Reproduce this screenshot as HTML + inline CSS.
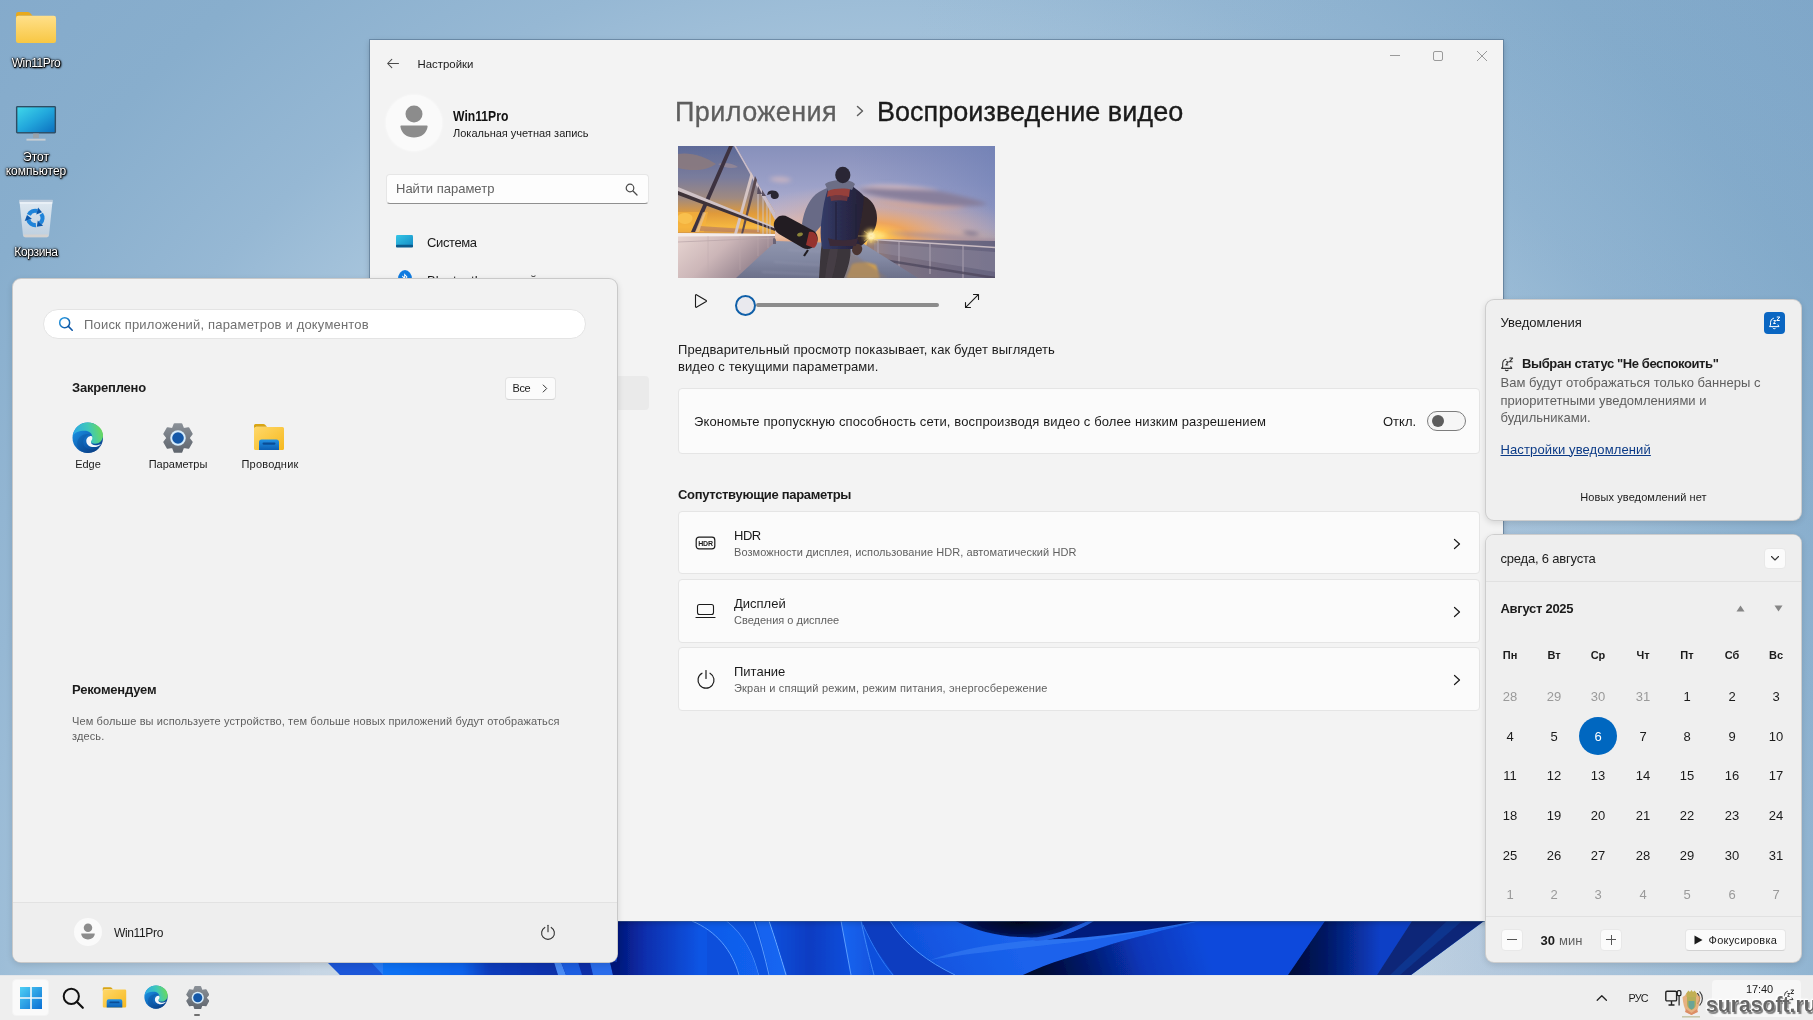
<!DOCTYPE html>
<html lang="ru">
<head>
<meta charset="utf-8">
<title>Desktop</title>
<style>
*{box-sizing:border-box;margin:0;padding:0}
html,body{width:1813px;height:1020px;overflow:hidden}
body{font-family:"Liberation Sans",sans-serif;font-size:13px;color:#1b1b1b;position:relative;
background:#8fb2d1;}
.abs{position:absolute}
#wall{position:absolute;left:0;top:0;width:1813px;height:1020px;
background:
linear-gradient(90deg,rgba(110,155,192,0) 50%,rgba(110,155,192,.22) 100%),
radial-gradient(ellipse 1300px 1444px at 900px 1000px,#c9d8e6 0%,#c9d8e6 40%,#bfd0e2 46%,#a5c3db 65%,#96b8d4 73%,#88aecd 86%,#84aacb 100%);}
#bloom{position:absolute;left:330px;top:921px;width:1320px;height:54px}
/* desktop icons */
.dlabel{will-change:transform;position:absolute;color:#fff;font-size:12px;line-height:14px;text-align:center;width:90px;
text-shadow:0 0 2px #000,0 0 3px rgba(0,0,0,.8),1px 1px 2px #000,0 1px 1px #000,1px 0 1px rgba(0,0,0,.7)}
/* settings window */
#win{will-change:transform;position:absolute;left:370px;top:40px;width:1133px;height:881px;background:#f3f3f3;
box-shadow:0 0 0 1px rgba(70,100,130,.5),0 2px 6px rgba(0,0,0,.22)}
.card{position:absolute;left:308px;width:802px;background:#fbfbfb;border:1px solid #e5e5e5;border-radius:4px}
.card .t{position:absolute;left:55px;font-size:13px;color:#1b1b1b}
.card .s{position:absolute;left:55px;font-size:11px;color:#5f5f5f}
/* start */
#start{will-change:transform;position:absolute;left:12px;top:278px;width:606px;height:685px;background:#f2f2f2;border-radius:9px;
border:1px solid rgba(0,0,0,.17);box-shadow:0 2px 6px rgba(0,0,0,.12);overflow:hidden}
#startfoot{position:absolute;left:0;top:623px;width:100%;height:62px;background:#eeeeee;border-top:1px solid #e2e2e2}
.pin{position:absolute;width:90px;text-align:center;font-size:11px;color:#1b1b1b}
/* panels */
.panel{will-change:transform;position:absolute;left:1485px;width:317px;background:#efefef;border-radius:9px;border:1px solid rgba(0,0,0,.14);
box-shadow:0 2px 6px rgba(0,0,0,.12);overflow:hidden}
.cal{position:absolute;width:40px;text-align:center;font-size:13px;color:#1b1b1b}
.cal.g{color:#9a9a9a}
.cal.h{font-weight:bold;font-size:11px}
/* taskbar */
#task{will-change:transform;position:absolute;left:0;top:975px;width:1813px;height:45px;background:#eeeeee;border-top:1px solid #e3e6ea}
</style>
</head>
<body>
<div id="wall"></div>


<svg class="abs" style="left:300px;top:921px" width="1200" height="54" viewBox="300 921 1200 54" preserveAspectRatio="none">
<defs>
  <linearGradient id="b0" x1="617" y1="0" x2="700" y2="0" gradientUnits="userSpaceOnUse"><stop offset="0" stop-color="#04177a"/><stop offset=".35" stop-color="#0a2fae"/><stop offset="1" stop-color="#0d55e4"/></linearGradient>
  <linearGradient id="b1" x1="690" y1="0" x2="790" y2="0" gradientUnits="userSpaceOnUse"><stop offset="0" stop-color="#0e58e8"/><stop offset="1" stop-color="#1467f2"/></linearGradient>
  <linearGradient id="b2" x1="770" y1="0" x2="850" y2="0" gradientUnits="userSpaceOnUse"><stop offset="0" stop-color="#0d50dc"/><stop offset=".5" stop-color="#0a3cc2"/><stop offset="1" stop-color="#0d4fdc"/></linearGradient>
  <linearGradient id="b3" x1="840" y1="0" x2="900" y2="0" gradientUnits="userSpaceOnUse"><stop offset="0" stop-color="#1866f2"/><stop offset="1" stop-color="#0b45cf"/></linearGradient>
  <linearGradient id="b4" x1="900" y1="975" x2="1000" y2="921" gradientUnits="userSpaceOnUse"><stop offset="0" stop-color="#0d4cd8"/><stop offset=".5" stop-color="#1459e4"/><stop offset="1" stop-color="#1a62ec"/></linearGradient>
  <radialGradient id="b5" cx="1020" cy="921" r="70" gradientUnits="userSpaceOnUse" gradientTransform="translate(1020 921) scale(1 .3) translate(-1020 -921)"><stop offset="0" stop-color="#01041c"/><stop offset=".6" stop-color="#03104a"/><stop offset="1" stop-color="#0a2c9a"/></radialGradient>
  <linearGradient id="b6" x1="1040" y1="975" x2="1200" y2="925" gradientUnits="userSpaceOnUse"><stop offset="0" stop-color="#010830"/><stop offset=".3" stop-color="#041a6e"/><stop offset=".6" stop-color="#0836b8"/><stop offset="1" stop-color="#0b4adc"/></linearGradient>
  <linearGradient id="b7" x1="1295" y1="0" x2="1380" y2="0" gradientUnits="userSpaceOnUse"><stop offset="0" stop-color="#020c3e"/><stop offset=".35" stop-color="#031762"/><stop offset="1" stop-color="#0a3fc6"/></linearGradient>
  <linearGradient id="bL" x1="0" y1="0" x2="340" y2="0" gradientUnits="userSpaceOnUse"><stop offset="0" stop-color="#a8c2dc"/><stop offset="1" stop-color="#c8d7e5"/></linearGradient><linearGradient id="bU" x1="383" y1="0" x2="560" y2="0" gradientUnits="userSpaceOnUse"><stop offset="0" stop-color="#0f72f4"/><stop offset=".45" stop-color="#0c62ea"/><stop offset=".6" stop-color="#0a3cbc"/><stop offset="1" stop-color="#0a2fa8"/></linearGradient><filter id="bb"><feGaussianBlur stdDeviation="0.600"/></filter>
</defs>
<g filter="url(#bb)">
  <!-- base -->
  <path d="M326 963L617 921H1484L1411 975H340z" fill="#0c4fdc"/>
  <path d="M300 955h27l13 20h-40z" fill="url(#bL)"/>
  <path d="M327 962H380L392 975H340z" fill="#1a56d8"/>
  <path d="M371 962l12 13h10l-10-13z" fill="#2a7cf4"/>
  <rect x="383" y="960" width="240" height="15" fill="url(#bU)"/>
  <path d="M554 962l4 13h8l-5-13z" fill="#4a8af4"/>
  <path d="M561 962l5 13h16l-4-13z" fill="#1c5de0"/>
  <path d="M590 962l3 13h20l-3-13z" fill="#2a6cea"/>
  <path d="M610 962h10v13h-7z" fill="#06187c"/>
  <rect x="617" y="921" width="90" height="54" fill="url(#b0)"/>
  <!-- left ribbons -->
  <path d="M690 921C715 930 732 950 740 975H790L770 921z" fill="url(#b1)"/>
  <path d="M692 921C716 931 732 950 739 975" fill="none" stroke="#5a9cff" stroke-width="1"/>
  <path d="M727 921C745 935 754 955 759 975" fill="none" stroke="#4f93fb" stroke-width="1.200"/>
  <path d="M727 921C745 935 754 955 759 975h11L756 921z" fill="#0d52e0"/>
  <path d="M754 921C760 938 765 958 769 975" fill="none" stroke="#5a9cff" stroke-width="1"/>
  <path d="M769 921C775 938 781 958 786 975" fill="none" stroke="#6aa6ff" stroke-width="1"/>
  <path d="M770 921L787 975H852L842 921z" fill="url(#b2)"/>
  <path d="M841 921L851 975H874L862 921z" fill="url(#b3)"/>
  <path d="M841 921L851 975" stroke="#5b9dff" stroke-width="1"/>
  <path d="M861 921C866 945 870 960 874 975" stroke="#3f86f8" stroke-width="1" fill="none"/>
  <path d="M862 921H892C910 945 930 962 956 975H894C880 955 868 940 862 921z" fill="#0a3cc0"/>
  <path d="M863 925C872 945 882 962 893 975" stroke="#2f78f2" stroke-width="1" fill="none"/>
  <!-- big petal -->
  <path d="M890 921C905 945 928 962 955 975H1023C1050 962 1078 955 1100 948C1130 938 1165 930 1201.700 921z" fill="url(#b4)"/>
  <path d="M930 960C980 952 1040 946 1090 940C1130 934 1170 927 1201.700 921C1160 926 1110 934 1060 938C1020 941 970 945 930 960z" fill="#3a80f4" opacity=".55"/>
  <path d="M890 921C905 945 928 962 955 975" stroke="#4d92fb" stroke-width="1" fill="none"/>
  <!-- dark fold top -->
  <path d="M955.500 921C975 930 995 936 1019 937C1030 937.500 1040 938 1046 938L1088.500 921z" fill="url(#b5)"/>
  <path d="M1093 921C1075 932 1060 938 1046 939.500C1100 938 1150 930 1196 921z" fill="#061f7c"/>
  <path d="M1028 938.500C1050 936 1070 930 1088.500 921L1094 921C1076 932 1056 939.500 1036 941z" fill="#2262e4"/>
  <!-- under petal -->
  <path d="M1023 975C1050 962 1078 955 1100 948C1130 938 1165 930 1201.700 921L1330 921L1290 975z" fill="url(#b6)"/>
  <!-- dark fold right -->
  <path d="M1325 921L1288 975H1377L1412 921z" fill="url(#b7)"/>
  <path d="M1412 921L1377 975H1411L1484 921z" fill="#0a2878"/>
  <path d="M1447 921L1390 975H1400L1462 921z" fill="#10348e"/>
</g>
</svg>

<svg width="0" height="0" style="position:absolute">
<defs>
  <linearGradient id="edA" x1="0.1" y1="0.2" x2="0.8" y2="1"><stop offset="0" stop-color="#1a8fe0"/><stop offset=".6" stop-color="#0e5fb4"/><stop offset="1" stop-color="#0a3f86"/></linearGradient>
  <linearGradient id="edB" x1="0" y1="0.5" x2="1" y2="0.3"><stop offset="0" stop-color="#2aa7e8"/><stop offset=".55" stop-color="#3fc8b8"/><stop offset="1" stop-color="#6fdb52"/></linearGradient>
  <linearGradient id="edC" x1="0" y1="0" x2="1" y2="1"><stop offset="0" stop-color="#0f6cc0"/><stop offset="1" stop-color="#0a3a7e"/></linearGradient>
  <symbol id="ic-edge" viewBox="0 0 32 32">
    <circle cx="16" cy="16" r="15.500" fill="url(#edA)"/>
    <path d="M1 14C2 6 8 .5 16 .5c8.500 0 15.500 6 15.500 13 0 5-3.500 8.500-8 8.500-3 0-4.500-1.200-4.500-2.500 0-1 1.500-1.800 1.500-4.500 0-3.500-3.500-6-7.500-6C7 9 2.500 11 1 14z" fill="url(#edB)"/>
    <path d="M11.500 21c0-4.500 3-7.500 6.500-8.500-5-1.500-11 1.500-12.500 7C4 25 8 31 15 31.500c5 .3 9-1.500 12-5-6 3-15.500 1-15.500-5.500z" fill="url(#edC)" opacity=".75"/>
    <path d="M19.500 14.200c-2.800 0-5 2.200-5 5 0 3.500 3.300 6.300 7.800 6.300 3 0 5.800-1.300 7.500-3.500-1.600 1-3.600 1.500-5.800 1.500-3 0-4.800-1.600-4.800-3.300 0-1.500 1.500-2 1.500-4 0-1.200-.5-2-1.200-2z" fill="#f4f7fb"/>
  </symbol>
  <linearGradient id="grA" x1="0" y1="0" x2="0" y2="1"><stop offset="0" stop-color="#8a9097"/><stop offset="1" stop-color="#60666e"/></linearGradient>
  <symbol id="ic-gear" viewBox="0 0 32 32">
    <path d="M10.630 5.720 L12.350 1.140 L19.650 1.140 L21.370 5.720 L22.220 6.210 L27.040 5.410 L30.690 11.730 L27.590 15.510 L27.590 16.490 L30.690 20.270 L27.040 26.590 L22.220 25.790 L21.370 26.280 L19.650 30.860 L12.350 30.860 L10.630 26.280 L9.780 25.790 L4.960 26.590 L1.310 20.270 L4.410 16.490 L4.410 15.510 L1.310 11.730 L4.960 5.410 L9.780 6.210Z" fill="url(#grA)" stroke="url(#grA)" stroke-width="2" stroke-linejoin="round"/>
    <circle cx="16" cy="16" r="8.300" fill="#d6ecfb"/>
    <circle cx="16" cy="16" r="6.200" fill="#1458a8"/>
  </symbol>
  <linearGradient id="exA" x1="0" y1="0" x2="1" y2="1"><stop offset="0" stop-color="#ffd869"/><stop offset="1" stop-color="#f6b920"/></linearGradient>
  <linearGradient id="exB" x1="0" y1="0" x2="0" y2="1"><stop offset="0" stop-color="#2392e4"/><stop offset="1" stop-color="#0c5fb4"/></linearGradient>
  <symbol id="ic-expl" viewBox="0 0 32 32">
    <path d="M1 5.500A1.500 1.500 0 0 1 2.500 4h8a2 2 0 0 1 1.400.6L14 6.700H3L1 9z" fill="#d9a514"/>
    <path d="M1 8.500A1.500 1.500 0 0 1 2.500 7H29.500A1.500 1.500 0 0 1 31 8.500V28.500A1.500 1.500 0 0 1 29.500 30H2.500A1.500 1.500 0 0 1 1 28.500z" fill="url(#exA)"/>
    <path d="M6 30v-8a2.500 2.500 0 0 1 2.500-2.500h15A2.500 2.500 0 0 1 26 22v8z" fill="url(#exB)"/>
    <rect x="9.500" y="22.500" width="13" height="2.200" rx="1.100" fill="#0a4d96"/>
  </symbol>
  <linearGradient id="fdA" x1="0" y1="0" x2="0" y2="1"><stop offset="0" stop-color="#ffe08a"/><stop offset="1" stop-color="#f8c743"/></linearGradient>
  <symbol id="ic-folder" viewBox="0 0 44 36">
    <path d="M1 4.500A2.500 2.500 0 0 1 3.500 2h10a3 3 0 0 1 2 .8L18.500 6H4L1 10z" fill="#e8a91c"/>
    <path d="M1 8.500A2.500 2.500 0 0 1 3.500 6H40.500A2.500 2.500 0 0 1 43 8.500V31.500A2.500 2.500 0 0 1 40.500 34H3.500A2.500 2.500 0 0 1 1 31.500z" fill="url(#fdA)"/>
  </symbol>
  <linearGradient id="pcA" x1="0" y1="0" x2="1" y2="1"><stop offset="0" stop-color="#3fd6ea"/><stop offset=".5" stop-color="#22a7dc"/><stop offset="1" stop-color="#0c70bf"/></linearGradient>
  <symbol id="ic-pc" viewBox="0 0 44 40">
    <rect x="1" y="1" width="42" height="29" rx="1.500" fill="#2f4d63"/>
    <rect x="2.500" y="2.500" width="39" height="26" fill="url(#pcA)"/>
    <path d="M19 30h6v5h-6z" fill="#9aa3ab"/>
    <path d="M12 35.500h20v2H12z" fill="#c7cdd2"/>
  </symbol>
  <linearGradient id="rbA" x1="0" y1="0" x2="0" y2="1"><stop offset="0" stop-color="#f2f6fa"/><stop offset="1" stop-color="#c9d6e3"/></linearGradient>
  <symbol id="ic-bin" viewBox="0 0 36 40">
    <path d="M1.400 2.200h33.200l-3.600 35.300a2 2 0 0 1-2 1.800H7a2 2 0 0 1-2-1.800z" fill="url(#rbA)" fill-opacity=".82"/>
    <path d="M1.400 1.800h33.200l-.3 3H1.700z" fill="#b9c9d9" fill-opacity=".9"/>
    <path d="M1.600 4.300h32.800l-.1 1.300H1.700z" fill="#f4f9fd"/>
    <path d="M5.600 36.500h24.800l-.2 1.600a1.500 1.500 0 0 1-1.500 1.200H7.300a1.500 1.500 0 0 1-1.500-1.200z" fill="#d9d2cc" fill-opacity=".8"/>
    <g id="rarr"><path d="M10.780 16.960A7.200 7.200 0 0 1 19.160 13.050" fill="none" stroke="#1f84da" stroke-width="4.200"/><path d="M20.040 9.400L18.280 16.600 24 14.300z" fill="#0b58ac"/></g>
    <use href="#rarr" transform="rotate(120 17.300 20)"/>
    <use href="#rarr" transform="rotate(240 17.300 20)"/>
  </symbol>
</defs>
</svg>
<svg class="abs" style="left:14.700px;top:9.500px" width="42" height="35" viewBox="0 0 44 36" preserveAspectRatio="none"><use href="#ic-folder"/></svg>
<div class="dlabel" style="left:-9.500px;top:56px;letter-spacing:-.4px">Win11Pro</div>
<svg class="abs" style="left:14.800px;top:105px" width="42" height="38" viewBox="0 0 44 40" preserveAspectRatio="none"><use href="#ic-pc"/></svg>
<div class="dlabel" style="left:-9.500px;top:150.500px;line-height:13.500px">Этот<br>компьютер</div>
<svg class="abs" style="left:18px;top:198px" width="36" height="40" viewBox="0 0 36 40"><use href="#ic-bin"/></svg>
<div class="dlabel" style="left:-9.500px;top:244.500px;letter-spacing:-.35px">Корзина</div>

<div id="win">
  <!-- titlebar -->
  <svg class="abs" style="left:16px;top:18px" width="14" height="11" viewBox="0 0 14 11"><path d="M12.500 5.500H1.800M5.800 1.300L1.600 5.500l4.200 4.200" fill="none" stroke="#4a4a4a" stroke-width="1.050" stroke-linecap="round" stroke-linejoin="round"/></svg>
  <div class="abs" style="left:47.500px;top:17px;font-size:11.400px;line-height:15px;color:#1b1b1b">Настройки</div>
  <svg class="abs" style="left:1019px;top:10px" width="100" height="12" viewBox="0 0 100 12">
    <path d="M1 5.5h10" stroke="#9a9a9a" stroke-width="1"/>
    <rect x="44.5" y="1.5" width="9" height="9" rx="1.5" fill="none" stroke="#9a9a9a" stroke-width="1"/>
    <path d="M88 1l10 10M98 1L88 11" stroke="#9a9a9a" stroke-width="1"/>
  </svg>
  <!-- account -->
  <div class="abs" style="left:15.500px;top:55px;width:56px;height:56px;border-radius:50%;background:#fafafa;box-shadow:0 0 3px rgba(255,255,255,.9)"></div>
  <svg class="abs" style="left:29.500px;top:65px" width="28" height="33" viewBox="0 0 28 33"><circle cx="14" cy="9" r="8.5" fill="#8c8c8c"/><path d="M1 20.5h26a1 1 0 0 1 .6 1.2C26.5 28.5 21 32.5 14 32.5S1.500 28.500.4 21.700A1 1 0 0 1 1 20.500z" fill="#8c8c8c"/></svg>
  <div class="abs" style="left:83px;top:68px;font-size:14.500px;font-weight:bold;line-height:17px;color:#111;transform:scaleX(.84);transform-origin:0 50%">Win11Pro</div>
  <div class="abs" style="left:83px;top:86px;font-size:11px;line-height:14px;color:#1b1b1b">Локальная учетная запись</div>
  <!-- search -->
  <div class="abs" style="left:16px;top:134px;width:263px;height:30px;background:#fdfdfd;border:1px solid #e6e6e6;border-bottom:1px solid #8f8f8f;border-radius:4px"></div>
  <div class="abs" style="left:26px;top:141px;font-size:13px;line-height:16px;color:#616161">Найти параметр</div>
  <svg class="abs" style="left:255px;top:143px" width="13" height="13" viewBox="0 0 13 13"><circle cx="5" cy="5" r="3.8" fill="none" stroke="#4a4a4a" stroke-width="1.2"/><path d="M8 8l4 4" stroke="#4a4a4a" stroke-width="1.3" stroke-linecap="round"/></svg>
  <!-- nav -->
  <svg class="abs" style="left:25.500px;top:195.300px" width="17" height="13" viewBox="0 0 19 14" preserveAspectRatio="none"><defs><linearGradient id="sysg" x1="0" y1="0" x2="1" y2="1"><stop offset="0" stop-color="#35c6e6"/><stop offset="1" stop-color="#1289c4"/></linearGradient></defs><rect x="0" y="0" width="19" height="13" rx="1.5" fill="url(#sysg)"/><rect x="0" y="10.5" width="19" height="3" rx="1" fill="#0b5a8c"/></svg>
  <div class="abs" style="left:57px;top:195px;font-size:13px;line-height:16px;color:#1b1b1b;letter-spacing:-.38px">Система</div>
  <svg class="abs" style="left:27.500px;top:230px" width="14" height="18" viewBox="0 0 18 18" preserveAspectRatio="none"><circle cx="9" cy="9" r="9" fill="#0f7be0"/><path d="M5.500 6l6 5-3 2.500V4.500l3 2.500-6 5" fill="none" stroke="#fff" stroke-width="1.100"/></svg>
  <div class="abs" style="left:57px;top:232.500px;font-size:13px;line-height:16px;color:#1b1b1b">Bluetooth и устройства</div>
  <div class="abs" style="left:16px;top:336px;width:263px;height:34px;background:#eaeaea;border-radius:4px"></div>
  <!-- heading -->
  <div class="abs" style="left:305px;top:54.500px;font-size:27px;line-height:34px;color:#5e5e5e;letter-spacing:.4px;-webkit-text-stroke:.3px #5e5e5e">Приложения</div>
  <svg class="abs" style="left:484.500px;top:64.500px" width="10" height="12" viewBox="0 0 10 12"><path d="M2.500 1.500L7.500 6l-5 4.500" fill="none" stroke="#5e5e5e" stroke-width="1.500" stroke-linecap="round" stroke-linejoin="round"/></svg>
  <div class="abs" style="left:507px;top:54.500px;font-size:27px;line-height:34px;color:#1a1a1a;letter-spacing:.03px;-webkit-text-stroke:.35px #1a1a1a">Воспроизведение видео</div>
  <svg class="abs" style="left:308px;top:106px" width="317" height="132" viewBox="0 0 317 132">
<defs>
  <linearGradient id="pSky" x1="0" y1="0" x2="0" y2="1"><stop offset="0" stop-color="#8790bb"/><stop offset=".3" stop-color="#9ca1c8"/><stop offset=".5" stop-color="#b6b2d0"/><stop offset=".62" stop-color="#d3c4d2"/><stop offset=".69" stop-color="#ecccb6"/><stop offset=".72" stop-color="#dcae94"/><stop offset=".75" stop-color="#8c7c8c"/><stop offset="1" stop-color="#66627a"/></linearGradient>
  <linearGradient id="pSkyR" x1="0" y1="0" x2="1" y2="0"><stop offset="0" stop-color="#6f7fb6" stop-opacity="0"/><stop offset=".55" stop-color="#6f7fb6" stop-opacity="0"/><stop offset="1" stop-color="#6578b2" stop-opacity=".55"/></linearGradient>
  <radialGradient id="pSun" cx="193" cy="90" r="85" gradientUnits="userSpaceOnUse" gradientTransform="translate(193 90) scale(1.700 .62) translate(-193 -90)"><stop offset="0" stop-color="#fff6c0"/><stop offset=".06" stop-color="#ffe27a"/><stop offset=".13" stop-color="#ffc04e"/><stop offset=".26" stop-color="#f6a24a" stop-opacity=".85"/><stop offset=".55" stop-color="#eeaa80" stop-opacity=".45"/><stop offset="1" stop-color="#e8b8a0" stop-opacity="0"/></radialGradient>
  <linearGradient id="pGlass" x1="0" y1="0" x2="0" y2="1"><stop offset="0" stop-color="#5d6a98"/><stop offset=".35" stop-color="#7a7c9c"/><stop offset=".58" stop-color="#a08a80"/><stop offset=".75" stop-color="#e09a3a"/><stop offset=".9" stop-color="#f6b840"/><stop offset="1" stop-color="#c98a48"/></linearGradient>
  <linearGradient id="pWall" x1="0" y1="0" x2="1" y2=".5"><stop offset="0" stop-color="#e8d6d2"/><stop offset=".5" stop-color="#ccb6b8"/><stop offset="1" stop-color="#8e7c88"/></linearGradient>
  <linearGradient id="pDeck" x1="0" y1="0" x2="0" y2="1"><stop offset="0" stop-color="#9096ae"/><stop offset=".5" stop-color="#8288a2"/><stop offset="1" stop-color="#6c708a"/></linearGradient>
  <linearGradient id="pSea" x1="0" y1="0" x2="1" y2="0"><stop offset="0" stop-color="#a8846c"/><stop offset=".25" stop-color="#7e7282"/><stop offset="1" stop-color="#666480"/></linearGradient>
  <linearGradient id="pPack" x1="0" y1="0" x2="1" y2="0"><stop offset="0" stop-color="#343c68"/><stop offset=".45" stop-color="#29294a"/><stop offset="1" stop-color="#251c28"/></linearGradient>
  <filter id="pb1" x="-20%" y="-20%" width="140%" height="140%"><feGaussianBlur stdDeviation="1.200"/></filter>
  <filter id="pb2" x="-20%" y="-40%" width="140%" height="180%"><feGaussianBlur stdDeviation="2.200"/></filter>
  <filter id="pb05" x="-10%" y="-10%" width="120%" height="120%"><feGaussianBlur stdDeviation="0.750"/></filter>
  <clipPath id="pclip"><rect x="0" y="0" width="317" height="132"/></clipPath>
</defs>
<g clip-path="url(#pclip)">
  <rect width="317" height="132" fill="url(#pSky)"/>
  <rect width="317" height="132" fill="url(#pSkyR)"/>
  <rect width="317" height="132" fill="url(#pSun)"/>
  <!-- clouds -->
  <g filter="url(#pb2)">
    <path d="M180 44c16-4 40-4 66-1 24 3 48 9 64 15-16 4-44 2-70-2-26-3-48-6-60-12z" fill="#857b98" opacity=".9"/>
    <path d="M182 41c20-4 50-2 80 3-30-1-56-1-80-3z" fill="#dcc0c4" opacity=".8"/>
    <path d="M190 53c28 4 60 7 100 8-30 5-70 1-100-8z" fill="#dda489" opacity=".65"/>
    <path d="M91 33c6-3 16-3 23 1-7 4-17 3-23-1z" fill="#c4b2c2"/>
    <path d="M206 87c20-2 50 0 80 3 16 2 26 3 32 4v3c-30-1-80-5-112-10z" fill="#9a88a0" opacity=".6"/>
    <path d="M284 86c6-1 14 0 18 2-6 2-12 1-18-2z" fill="#726c8a"/>
  </g>
  <!-- sea and right railing -->
  <g filter="url(#pb05)">
    <path d="M190 93l127 2v37H180z" fill="url(#pSea)"/>
    <path d="M196 93.500l121 8" stroke="#c9bcc2" stroke-width="1.400"/>
    <path d="M200 94v26M221 96v28M252 98v30M285 100v32" stroke="#b4a9b6" stroke-width="1.100" opacity=".85"/>
    <path d="M196 97l121 9v20l-121-20z" fill="#9c94a8" opacity=".35"/>
    <path d="M180 110l137 22" stroke="#4d475c" stroke-width="2.600" opacity=".75"/>
  </g>
  <!-- deck -->
  <path d="M98 95L56 132H240L186 98z" fill="url(#pDeck)" filter="url(#pb05)"/>
  <path d="M110 104l70 4M96 116l90 6M84 126l110 5" stroke="#a3a6be" stroke-width="1.200" opacity=".45" filter="url(#pb1)"/>
  <path d="M174 118c6-2 18-2 24 1l4 13h-34z" fill="#e6a840" opacity=".8" filter="url(#pb1)"/>
  <path d="M170 104l40 28h-50z" fill="#8a7870" opacity=".5" filter="url(#pb1)"/>
  <!-- ship glass wall left -->
  <g filter="url(#pb05)">
    <path d="M0 0H58C70 22 84 44 97 66V90L0 88z" fill="url(#pGlass)"/>
    <path d="M0 8c12-2 26 2 38 10-8 6-22 8-38 4z" fill="#8c7a7c" opacity=".85"/>
    <path d="M40 18c6-2 14-1 20 3-6 2-14 1-20-3z" fill="#9c8c94" opacity=".7"/>
    <path d="M58 0c12 22 26 44 39 66v8C84 50 70 24 56 0z" fill="#c9bcc8"/>
    <path d="M0 70c3-4 11-4 14 0 2 4-2 8-7 8s-9-4-7-8z" fill="#ffe27a"/>
    <path d="M0 66h30l-4 20H0z" fill="#f6b23c" opacity=".7"/>
    <path d="M22 80l60 4v3l-60-2z" fill="#b07868" opacity=".6"/>
    <path d="M51 0L13 86h4.500L55 0z" fill="#3c3240"/>
    <path d="M17 86l8-20 3 1-7 19z" fill="#e8c090" opacity=".7"/>
    <path d="M73 26L56 88h3L75 30z" fill="#d4c4c4"/>
    <path d="M77 30L63 88h2L79 34z" fill="#5a4a50"/>
    <path d="M0 42L97 82v3L0 49z" fill="#3e3238"/>
    <path d="M0 41L97 81v1.500L0 45z" fill="#cfc2c6"/>
    <path d="M80 46v40M85 50v38M89 56v32M92 62v26" stroke="#cfc6cc" stroke-width=".9"/>
    <path d="M80 40l4 8-5 0zM84 44l4 6h-4z" fill="#5a5060"/>
    <path d="M90 46c3-2 8-2 10 1s0 6-3 6-5-2-4-5l-4 1z" fill="#2c2630"/>
    <!-- white wall -->
    <path d="M0 87L97 88 97 96 58 132H0z" fill="url(#pWall)"/>
    <path d="M0 87L97 88v2L0 90.500z" fill="#f4ecea"/>
    <path d="M0 96L97 92" stroke="#b8a4a8" stroke-width="1" opacity=".7"/>
    <path d="M30 90v42M62 90v34M80 90v20M90 90v12" stroke="#bca8ac" stroke-width=".8" opacity=".6"/>
    <path d="M96 92c1 0 2 1 2 3v3h-3v-3c0-2 0-3 1-3z" fill="#6a6474"/>
  </g>
  <!-- man -->
  <g filter="url(#pb05)">
    <path d="M141 132c1-12 1-24 3-36h28c2 12-1 24-6 36z" fill="#3a343a"/>
    <path d="M147 132c1-10 3-20 5-30h8c-1 10-3 20-6 30z" fill="#4a4248" opacity=".7"/>
    <path d="M124 78c2-14 8-27 17-32 5-3 10-5 15-6l6 4-14 30-12 14c-6-2-10-5-12-10z" fill="#686b86"/>
    <path d="M150 42c4-3 10-4 15-4 6 0 10 2 13 5 4 3 8 6 10 10 6 5 10 12 10 20 0 10-6 18-13 24l-6 6h-34c-3-8-3-20-1-32 1-10 3-20 6-29z" fill="url(#pPack)"/>
    <path d="M186 50c8 4 13 12 13 22 0 10-6 20-16 28l-4-8c4-14 6-28 7-42z" fill="#33262c"/>
    <path d="M150 44c5-3 16-4 22-1l-1 8c-7-2-15-2-22 0z" fill="#96403a"/>
    <path d="M152 50c6-1 12-1 18 0l-1 5c-5-1-11-1-16 0z" fill="#7c3a3c" opacity=".8"/>
    <path d="M147 38c4-3 11-4 17-4s10 1 13 4l-3 6c-6-2-17-2-24 1z" fill="#6c6e86"/>
    <ellipse cx="164.800" cy="29" rx="7.600" ry="8.300" fill="#2a2835"/>
    <path d="M176 98c3-1 7 0 8 3s-1 7-4 8-6-2-6-5z" fill="#4c3630"/>
    <path d="M158 56v38M178 58v40" stroke="#222038" stroke-width="1.300" opacity=".8"/>
    <path d="M150 92c8 3 22 3 30 0l-2 8h-26z" fill="#3a2c38"/>
  </g>
  <!-- snowboard bag -->
  <g filter="url(#pb05)">
    <path d="M99 72c3-3 7-3 11-1l26 14c4 3 5 9 2 13-3 5-9 6-13 4L101 88c-6-4-7-12-2-16z" fill="#221c22"/>
    <path d="M131 86c4-1 7 1 8 5s0 9-3 11l-8-3z" fill="#9c3230" opacity=".95"/>
    <path d="M130 104l-4 6" stroke="#221c22" stroke-width="2.200"/>
    <ellipse cx="122" cy="88.500" rx="3" ry="1.800" fill="#b8b040" opacity=".7" transform="rotate(-20 122 88.500)"/>
  </g>
  <!-- sun flare -->
  <circle cx="193" cy="90" r="7" fill="#ffd866" opacity=".8" filter="url(#pb2)"/><circle cx="193" cy="90" r="3.800" fill="#fff6c8" filter="url(#pb1)"/>
  <path d="M180 90h26M193 83v14M186 85l14 10M200 85l-14 10" stroke="#ffe080" stroke-width=".7" opacity=".6" filter="url(#pb05)"/>
</g>
</svg>

  <!-- player controls -->
  <svg class="abs" style="left:323px;top:253px" width="16" height="16" viewBox="0 0 16 16"><path d="M2.500 2.200v11.600a.6.600 0 0 0 .9.500l9.800-5.800a.6.600 0 0 0 0-1L3.400 1.700a.6.600 0 0 0-.9.500z" fill="none" stroke="#1b1b1b" stroke-width="1.100" stroke-linejoin="round"/></svg>
  <div class="abs" style="left:386px;top:263px;width:183px;height:4px;background:#8b8b8b;border-radius:2px"></div>
  <div class="abs" style="left:365px;top:255px;width:21px;height:21px;border-radius:50%;border:2px solid #0f5fa8;background:#e9e9ee"></div>
  <svg class="abs" style="left:594px;top:253px" width="16" height="16" viewBox="0 0 16 16"><path d="M9.500 1.500h5v5M14.300 1.700L1.700 14.300M1.500 9.500v5h5" fill="none" stroke="#1b1b1b" stroke-width="1.100" stroke-linecap="round" stroke-linejoin="round"/></svg>
  <div class="abs" style="left:308px;top:301px;font-size:13px;line-height:17px;color:#1b1b1b;white-space:nowrap;letter-spacing:.09px">Предварительный просмотр показывает, как будет выглядеть<br>видео с текущими параметрами.</div>
  <!-- card toggle -->
  <div class="card" style="top:348.300px;height:65.400px">
    <div class="abs" style="left:15px;top:24.700px;font-size:13px;line-height:16px;white-space:nowrap;letter-spacing:.128px">Экономьте пропускную способность сети, воспроизводя видео с более низким разрешением</div>
    <div class="abs" style="left:704px;top:24.700px;font-size:13px;line-height:16px">Откл.</div>
    <div class="abs" style="left:747.500px;top:22.200px;width:39px;height:20px;border:1px solid #7d7d7d;border-radius:10px;background:#f6f6f6"></div>
    <div class="abs" style="left:752.500px;top:26.200px;width:12px;height:12px;border-radius:50%;background:#5d5d5d"></div>
  </div>
  <div class="abs" style="left:308px;top:446.600px;font-size:13px;line-height:16px;font-weight:bold;color:#1b1b1b;letter-spacing:-.32px">Сопутствующие параметры</div>
  <div class="card" style="top:470.600px;height:63.900px">
    <svg class="abs" style="left:16px;top:22px" width="21" height="18" viewBox="0 0 21 18"><rect x="1.200" y="3.200" width="18.600" height="11.600" rx="2.800" fill="none" stroke="#1b1b1b" stroke-width="1.200"/><text x="10.500" y="11.700" font-size="7" font-weight="bold" text-anchor="middle" font-family="Liberation Sans" fill="#1b1b1b" letter-spacing="-.2">HDR</text></svg>
    <div class="t" style="top:16px;line-height:16px;letter-spacing:-.5px">HDR</div>
    <div class="s" style="top:33px;line-height:14px;letter-spacing:.07px">Возможности дисплея, использование HDR, автоматический HDR</div>
    <svg class="abs" style="left:774px;top:26px" width="8" height="12" viewBox="0 0 8 12"><path d="M1.500 1.500L6.500 6l-5 4.500" fill="none" stroke="#1b1b1b" stroke-width="1.200" stroke-linecap="round" stroke-linejoin="round"/></svg>
  </div>
  <div class="card" style="top:538.800px;height:64px">
    <svg class="abs" style="left:16px;top:23px" width="21" height="17" viewBox="0 0 21 17"><rect x="2.500" y="1.500" width="16" height="10" rx="2" fill="none" stroke="#1b1b1b" stroke-width="1.100"/><path d="M1 14.500h19" stroke="#1b1b1b" stroke-width="1.200" stroke-linecap="round"/></svg>
    <div class="t" style="top:16px;line-height:16px">Дисплей</div>
    <div class="s" style="top:33px;line-height:14px">Сведения о дисплее</div>
    <svg class="abs" style="left:774px;top:26px" width="8" height="12" viewBox="0 0 8 12"><path d="M1.500 1.500L6.500 6l-5 4.500" fill="none" stroke="#1b1b1b" stroke-width="1.200" stroke-linecap="round" stroke-linejoin="round"/></svg>
  </div>
  <div class="card" style="top:606.700px;height:64.200px">
    <svg class="abs" style="left:17px;top:21px" width="20" height="21" viewBox="0 0 20 21"><path d="M10 1.500v8" stroke="#1b1b1b" stroke-width="1.200" stroke-linecap="round"/><path d="M6 4.200a8 8 0 1 0 8 0" fill="none" stroke="#1b1b1b" stroke-width="1.200" stroke-linecap="round"/></svg>
    <div class="t" style="top:16px;line-height:16px">Питание</div>
    <div class="s" style="top:33px;line-height:14px;letter-spacing:.19px">Экран и спящий режим, режим питания, энергосбережение</div>
    <svg class="abs" style="left:774px;top:26px" width="8" height="12" viewBox="0 0 8 12"><path d="M1.500 1.500L6.500 6l-5 4.500" fill="none" stroke="#1b1b1b" stroke-width="1.200" stroke-linecap="round" stroke-linejoin="round"/></svg>
  </div>
</div>

<div id="start">
  <div class="abs" style="left:30px;top:30px;width:543px;height:30px;background:#fff;border:1px solid #e4e4e4;border-radius:15px"></div>
  <svg class="abs" style="left:44.500px;top:37px" width="16" height="16" viewBox="0 0 18 18"><defs><linearGradient id="sg" x1="0" y1="0" x2="1" y2="1"><stop offset="0" stop-color="#2aa0e8"/><stop offset="1" stop-color="#0b4e9c"/></linearGradient></defs><circle cx="7.500" cy="7.500" r="5.600" fill="none" stroke="url(#sg)" stroke-width="1.700"/><path d="M11.700 11.700l4.300 4.300" stroke="#0d56a6" stroke-width="1.800" stroke-linecap="round"/></svg>
  <div class="abs" style="left:71px;top:37.800px;font-size:13px;line-height:16px;color:#707070;letter-spacing:.18px">Поиск приложений, параметров и документов</div>
  <div class="abs" style="left:59px;top:100.700px;font-size:13px;line-height:16px;font-weight:bold;color:#1b1b1b;letter-spacing:-.2px">Закреплено</div>
  <div class="abs" style="left:492px;top:97.600px;width:51px;height:23px;background:#fbfbfb;border:1px solid #e3e3e3;border-bottom-color:#d2d2d2;border-radius:4px"></div>
  <div class="abs" style="left:499.500px;top:103px;font-size:11px;line-height:13px;color:#1b1b1b;letter-spacing:-.4px">Все</div>
  <svg class="abs" style="left:529px;top:105px" width="6" height="9" viewBox="0 0 6 9"><path d="M1.200 1l3.500 3.500L1.200 8" fill="none" stroke="#333" stroke-width="1" stroke-linecap="round" stroke-linejoin="round"/></svg>
  <!-- pinned -->
  <svg class="abs" style="left:58.800px;top:142.800px" width="31.500" height="31.500" viewBox="0 0 32 32"><use href="#ic-edge"/></svg>
  <div class="pin" style="left:30px;top:179px">Edge</div>
  <svg class="abs" style="left:150px;top:143.500px" width="30" height="30" viewBox="0 0 32 32"><use href="#ic-gear"/></svg>
  <div class="pin" style="left:120px;top:179px">Параметры</div>
  <svg class="abs" style="left:240px;top:141.200px" width="32" height="32" viewBox="0 0 32 32"><use href="#ic-expl"/></svg>
  <div class="pin" style="left:212px;top:179px;letter-spacing:.2px">Проводник</div>
  <div class="abs" style="left:59px;top:403px;font-size:13px;line-height:16px;font-weight:bold;color:#1b1b1b;letter-spacing:-.2px">Рекомендуем</div>
  <div class="abs" style="left:59px;top:435px;font-size:11px;line-height:15px;color:#5f5f5f;white-space:nowrap;letter-spacing:.115px">Чем больше вы используете устройство, тем больше новых приложений будут отображаться<br>здесь.</div>
  <div id="startfoot">
    <div class="abs" style="left:61px;top:15px;width:28px;height:28px;border-radius:50%;background:#fafafa"></div>
    <svg class="abs" style="left:68px;top:20px" width="14" height="17" viewBox="0 0 28 33"><circle cx="14" cy="9" r="8.500" fill="#8c8c8c"/><path d="M1 20.500h26a1 1 0 0 1 .6 1.200C26.500 28.500 21 32.500 14 32.500S1.500 28.500.4 21.700A1 1 0 0 1 1 20.500z" fill="#8c8c8c"/></svg>
    <div class="abs" style="left:101px;top:22.800px;font-size:12px;line-height:14px;color:#1b1b1b;letter-spacing:-.35px">Win11Pro</div>
    <svg class="abs" style="left:527px;top:21px" width="16" height="17" viewBox="0 0 20 21"><path d="M10 1.500v8" stroke="#333" stroke-width="1.400" stroke-linecap="round"/><path d="M6 4.200a8 8 0 1 0 8 0" fill="none" stroke="#333" stroke-width="1.400" stroke-linecap="round"/></svg>
  </div>
</div>

<div class="panel" style="left:1484.500px;width:317px;top:299px;height:222px">
  <div class="abs" style="left:14.500px;top:15px;font-size:13px;line-height:16px;color:#1b1b1b">Уведомления</div>
  <div class="abs" style="left:278px;top:12px;width:21px;height:22px;background:#0a66c2;border-radius:4px"></div>
  <svg class="abs" style="left:282px;top:16px" width="14" height="14" viewBox="0 0 14 14"><path d="M5.500 2.200A4.200 4.200 0 0 0 2.500 6.300V9l-1 1.600h9.500L10 9" fill="none" stroke="#fff" stroke-width="1" stroke-linecap="round" stroke-linejoin="round"/><path d="M4.800 11.800a1.700 1.700 0 0 0 3 0" fill="none" stroke="#fff" stroke-width="1"/><path d="M5.500 4.500h2.200L5.500 7.500h2.200M8.800 1h3L8.800 4.500h3" fill="none" stroke="#fff" stroke-width="1" stroke-linejoin="round"/></svg>
  <svg class="abs" style="left:14px;top:57px" width="15" height="15" viewBox="0 0 14 14"><path d="M5.500 2.200A4.200 4.200 0 0 0 2.500 6.300V9l-1 1.600h9.500L10 9" fill="none" stroke="#333" stroke-width="1" stroke-linecap="round" stroke-linejoin="round"/><path d="M4.800 11.800a1.700 1.700 0 0 0 3 0" fill="none" stroke="#333" stroke-width="1"/><path d="M5.500 4.500h2.200L5.500 7.500h2.200M8.800 1h3L8.800 4.500h3" fill="none" stroke="#333" stroke-width="1" stroke-linejoin="round"/></svg>
  <div class="abs" style="left:36px;top:56px;font-size:13px;line-height:16px;font-weight:bold;color:#1b1b1b;white-space:nowrap;letter-spacing:-.39px">Выбран статус "Не беспокоить"</div>
  <div class="abs" style="left:14.500px;top:74px;font-size:13px;line-height:17.600px;color:#5f5f5f;white-space:nowrap;letter-spacing:.02px">Вам будут отображаться только баннеры с<br>приоритетными уведомлениями и<br>будильниками.</div>
  <div class="abs" style="left:14.500px;top:141.500px;font-size:13px;line-height:16px;color:#0b3a86;text-decoration:underline;white-space:nowrap;letter-spacing:.12px">Настройки уведомлений</div>
  <div class="abs" style="left:0;top:190px;width:315px;text-align:center;font-size:11px;line-height:14px;color:#1b1b1b;letter-spacing:.1px">Новых уведомлений нет</div>
</div>

<div class="panel" style="left:1484.500px;width:317px;top:534px;height:428.500px">
<div class="abs" style="left:0;top:0;width:100%;height:47px;background:#eeeeee;border-bottom:1px solid #e1e1e1"></div>
<div class="abs" style="left:14.500px;top:16px;font-size:13px;line-height:16px;color:#1b1b1b;letter-spacing:-.2px">среда, 6 августа</div>
<div class="abs" style="left:278px;top:13px;width:22px;height:21px;background:#fbfbfb;border:1px solid #e8e8e8;border-radius:4px"></div>
<svg class="abs" style="left:284px;top:20px" width="10" height="7" viewBox="0 0 10 7"><path d="M1.500 1.500L5 5l3.500-3.500" fill="none" stroke="#333" stroke-width="1.100" stroke-linecap="round" stroke-linejoin="round"/></svg>
<div class="abs" style="left:14.500px;top:66px;font-size:13px;line-height:16px;font-weight:bold;color:#1b1b1b;letter-spacing:-.28px">Август 2025</div>
<svg class="abs" style="left:250px;top:70px" width="9" height="7" viewBox="0 0 9 7"><path d="M4.500 .5L8.500 6.500H.5z" fill="#868686"/></svg>
<svg class="abs" style="left:288px;top:70px" width="9" height="7" viewBox="0 0 9 7"><path d="M4.500 6.500L8.500 .5H.5z" fill="#868686"/></svg>
<div class="cal h" style="left:4px;top:113px;line-height:14px">Пн</div>
<div class="cal h" style="left:48px;top:113px;line-height:14px">Вт</div>
<div class="cal h" style="left:92px;top:113px;line-height:14px">Ср</div>
<div class="cal h" style="left:137px;top:113px;line-height:14px">Чт</div>
<div class="cal h" style="left:181px;top:113px;line-height:14px">Пт</div>
<div class="cal h" style="left:226px;top:113px;line-height:14px">Сб</div>
<div class="cal h" style="left:270px;top:113px;line-height:14px">Вс</div>
<div class="abs" style="left:93px;top:182px;width:38px;height:38px;border-radius:50%;background:#0067c0"></div>
<div class="cal g" style="left:4px;top:153.60px;line-height:16px;">28</div>
<div class="cal g" style="left:48px;top:153.60px;line-height:16px;">29</div>
<div class="cal g" style="left:92px;top:153.60px;line-height:16px;">30</div>
<div class="cal g" style="left:137px;top:153.60px;line-height:16px;">31</div>
<div class="cal" style="left:181px;top:153.60px;line-height:16px;">1</div>
<div class="cal" style="left:226px;top:153.60px;line-height:16px;">2</div>
<div class="cal" style="left:270px;top:153.60px;line-height:16px;">3</div>
<div class="cal" style="left:4px;top:193.60px;line-height:16px;">4</div>
<div class="cal" style="left:48px;top:193.60px;line-height:16px;">5</div>
<div class="cal" style="left:92px;top:193.60px;line-height:16px;color:#fff;">6</div>
<div class="cal" style="left:137px;top:193.60px;line-height:16px;">7</div>
<div class="cal" style="left:181px;top:193.60px;line-height:16px;">8</div>
<div class="cal" style="left:226px;top:193.60px;line-height:16px;">9</div>
<div class="cal" style="left:270px;top:193.60px;line-height:16px;">10</div>
<div class="cal" style="left:4px;top:232.60px;line-height:16px;">11</div>
<div class="cal" style="left:48px;top:232.60px;line-height:16px;">12</div>
<div class="cal" style="left:92px;top:232.60px;line-height:16px;">13</div>
<div class="cal" style="left:137px;top:232.60px;line-height:16px;">14</div>
<div class="cal" style="left:181px;top:232.60px;line-height:16px;">15</div>
<div class="cal" style="left:226px;top:232.60px;line-height:16px;">16</div>
<div class="cal" style="left:270px;top:232.60px;line-height:16px;">17</div>
<div class="cal" style="left:4px;top:272.60px;line-height:16px;">18</div>
<div class="cal" style="left:48px;top:272.60px;line-height:16px;">19</div>
<div class="cal" style="left:92px;top:272.60px;line-height:16px;">20</div>
<div class="cal" style="left:137px;top:272.60px;line-height:16px;">21</div>
<div class="cal" style="left:181px;top:272.60px;line-height:16px;">22</div>
<div class="cal" style="left:226px;top:272.60px;line-height:16px;">23</div>
<div class="cal" style="left:270px;top:272.60px;line-height:16px;">24</div>
<div class="cal" style="left:4px;top:312.60px;line-height:16px;">25</div>
<div class="cal" style="left:48px;top:312.60px;line-height:16px;">26</div>
<div class="cal" style="left:92px;top:312.60px;line-height:16px;">27</div>
<div class="cal" style="left:137px;top:312.60px;line-height:16px;">28</div>
<div class="cal" style="left:181px;top:312.60px;line-height:16px;">29</div>
<div class="cal" style="left:226px;top:312.60px;line-height:16px;">30</div>
<div class="cal" style="left:270px;top:312.60px;line-height:16px;">31</div>
<div class="cal g" style="left:4px;top:351.60px;line-height:16px;">1</div>
<div class="cal g" style="left:48px;top:351.60px;line-height:16px;">2</div>
<div class="cal g" style="left:92px;top:351.60px;line-height:16px;">3</div>
<div class="cal g" style="left:137px;top:351.60px;line-height:16px;">4</div>
<div class="cal g" style="left:181px;top:351.60px;line-height:16px;">5</div>
<div class="cal g" style="left:226px;top:351.60px;line-height:16px;">6</div>
<div class="cal g" style="left:270px;top:351.60px;line-height:16px;">7</div>
<div class="abs" style="left:0;top:381px;width:100%;height:1px;background:#e1e1e1"></div>
<div class="abs" style="left:14.500px;top:393.500px;width:22px;height:22.500px;background:#fbfbfb;border:1px solid #e8e8e8;border-radius:4px"></div>
<div class="abs" style="left:21px;top:404px;width:10px;height:1px;background:#555"></div>
<div class="abs" style="left:54.500px;top:397.800px;font-size:13px;line-height:16px;color:#1b1b1b;white-space:nowrap;letter-spacing:.1px"><b>30</b> <span style="color:#5f5f5f">мин</span></div>
<div class="abs" style="left:114px;top:394px;width:22px;height:22px;background:#fbfbfb;border:1px solid #e8e8e8;border-radius:4px"></div>
<div class="abs" style="left:120px;top:404px;width:10px;height:1px;background:#555"></div><div class="abs" style="left:124.500px;top:400px;width:1px;height:10px;background:#555"></div>
<div class="abs" style="left:199px;top:393.500px;width:101px;height:22.500px;background:#fbfbfb;border:1px solid #e6e6e6;border-bottom-color:#d2d2d2;border-radius:4px"></div>
<svg class="abs" style="left:208px;top:400px" width="9" height="10" viewBox="0 0 9 10"><path d="M.5 .5v9l8-4.500z" fill="#1b1b1b"/></svg>
<div class="abs" style="left:222.500px;top:398px;font-size:11px;line-height:14px;color:#1b1b1b;letter-spacing:.27px">Фокусировка</div>
</div>
<div id="task">
  <div class="abs" style="left:11.800px;top:3px;width:37.200px;height:37px;border-radius:4px;background:#fafafa;border:1px solid #f4f4f4"></div>
  <svg class="abs" style="left:20px;top:11px" width="22" height="22" viewBox="0 0 22 22"><defs><linearGradient id="wl" x1="0" y1="0" x2="1" y2="1"><stop offset="0" stop-color="#4fd0f5"/><stop offset="1" stop-color="#0a6fd4"/></linearGradient></defs><path d="M0 0h10.200v10.200H0zM11.800 0H22v10.200H11.800zM0 11.800h10.200V22H0zM11.800 11.800H22V22H11.800z" fill="url(#wl)"/></svg>
  <svg class="abs" style="left:61px;top:10px" width="24" height="24" viewBox="0 0 24 24"><circle cx="10.300" cy="10.300" r="7.600" fill="none" stroke="#111" stroke-width="2"/><path d="M15.800 15.800l6 6" stroke="#111" stroke-width="2.200" stroke-linecap="round"/></svg>
  <svg class="abs" style="left:102px;top:8.300px" width="25" height="25" viewBox="0 0 32 32"><use href="#ic-expl"/></svg>
  <svg class="abs" style="left:144px;top:9px" width="24" height="24" viewBox="0 0 32 32"><use href="#ic-edge"/></svg>
  <svg class="abs" style="left:185.500px;top:9.500px" width="23.500" height="23.500" viewBox="0 0 32 32"><use href="#ic-gear"/></svg>
  <div class="abs" style="left:194px;top:37.500px;width:6px;height:2px;border-radius:1px;background:#707070"></div>
  <!-- tray -->
  <svg class="abs" style="left:1596px;top:17.500px" width="12" height="8" viewBox="0 0 12 8"><path d="M1.200 6.200L5.800 1.700l4.600 4.500" fill="none" stroke="#222" stroke-width="1.300" stroke-linecap="round" stroke-linejoin="round"/></svg>
  <div class="abs" style="left:1628.500px;top:15px;font-size:10.800px;line-height:14px;color:#1b1b1b;letter-spacing:-.75px">РУС</div>
  <svg class="abs" style="left:1665px;top:13px" width="19" height="18" viewBox="0 0 19 18"><rect x=".8" y="2.300" width="10.800" height="9.600" rx="1.200" fill="none" stroke="#222" stroke-width="1.400"/><path d="M3.500 16h6M6.500 12v4" stroke="#222" stroke-width="1.400"/><rect x="12.300" y="1.700" width="3.600" height="5" rx="1.300" fill="#eee" stroke="#222" stroke-width="1.200"/><path d="M14.100 6.700v9.800" stroke="#222" stroke-width="1.200"/></svg>
  <div class="abs" style="left:1712px;top:3.500px;width:89px;height:37px;border-radius:4px;background:#f7f7f7"></div>
  <div class="abs" style="left:1746px;top:6.300px;font-size:11px;line-height:14px;color:#1b1b1b;letter-spacing:-.1px">17:40</div>
  <!-- emblem + volume -->
  <svg class="abs" style="left:1680px;top:13px" width="26" height="30" viewBox="0 0 26 30"><defs><filter id="emb"><feGaussianBlur stdDeviation=".55"/></filter></defs><path d="M17.500 4.500a7 7 0 0 1 0 10M19.800 2.800a10 10 0 0 1 0 13.400" fill="none" stroke="#3a3a3a" stroke-width="1.100" stroke-linecap="round"/><g filter="url(#emb)" opacity=".82"><path d="M2.500 8c2-1 3-2 4-4h10c1 2 2 3 4 4-1 6-2 11-4 15l-5 3-5-3C4 19 3 14 2.500 8z" fill="#e6a468"/><path d="M6.500 4l2-2.500 1.500 1.500 1.500-2 1.500 2 1.500-1.500 2 2.500v4h-10z" fill="#b8a232"/><path d="M7 8h9v7c0 3-2 5-4.500 6C9 20 7 18 7 15z" fill="#a8a038"/><path d="M8.500 12h6v5c0 1.500-1.500 3-3 3.500-1.500-.5-3-2-3-3.500z" fill="#4f9484"/><path d="M6 20l5.500 4 5.500-4 1 3-6.500 3-6.500-3z" fill="#d97a4a"/><path d="M2 27h18v1.600H2z" fill="#b4b48a" opacity=".8"/></g></svg>
  <svg class="abs" style="left:1782px;top:13px" width="14" height="14" viewBox="0 0 14 14"><path d="M5.500 2.200A4.200 4.200 0 0 0 2.500 6.300V9l-1 1.600h9.500L10 9" fill="none" stroke="#333" stroke-width="1" stroke-linecap="round" stroke-linejoin="round"/><path d="M5.500 4.500h2.200L5.500 7.500h2.200M8.800 1h3L8.800 4.500h3" fill="none" stroke="#333" stroke-width="1" stroke-linejoin="round"/></svg>
  <div class="abs" style="left:1706px;top:13.500px;font-size:21.200px;line-height:30px;font-weight:bold;color:#666;white-space:nowrap;letter-spacing:0;text-shadow:-1px -1px 1px #fff,-1px 0 1px #fff,0 -1px 1px #fff,1.500px 1.500px 1px rgba(20,20,20,.55),0 0 3px #fff,0 0 4px #fff">surasoft.ru</div>
</div>

</body>
</html>
